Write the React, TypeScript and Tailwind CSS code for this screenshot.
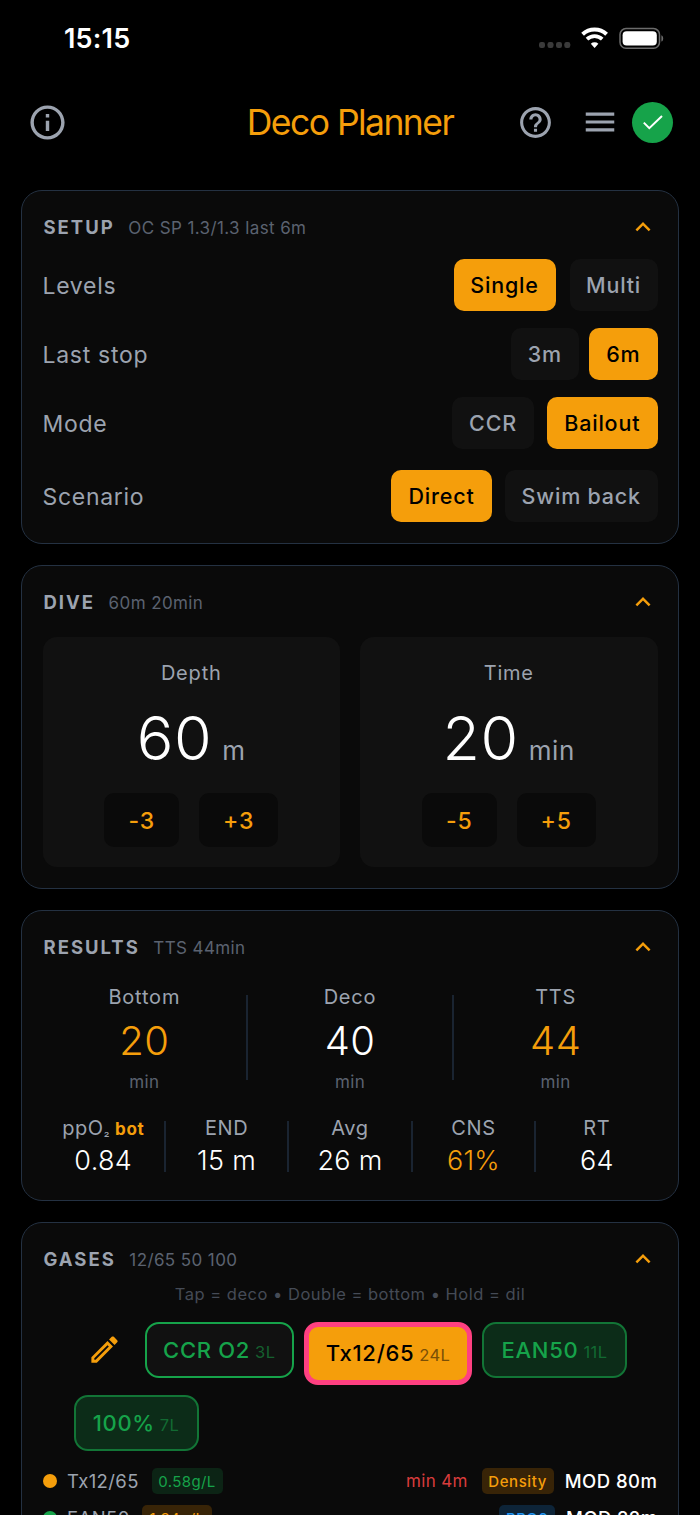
import React from 'react';
import { MdHelpOutline, MdInfoOutline, MdKeyboardArrowUp, MdMenu, MdOutlineEdit } from 'react-icons/md';
import clsx from 'clsx';

interface CardProps {
  title: string;
  summary: string;
  className?: string;
  children: React.ReactNode;
}

const Card: React.FC<CardProps> = ({ title, summary, className, children }) => (
  <section
    className={clsx(
      'w-[658px] shrink-0 overflow-hidden rounded-[21px] border border-[#243142] bg-[#0a0a0a] px-[20.5px]',
      className
    )}
  >
    <header className="flex h-[72px] items-center justify-between">
      <div className="flex items-baseline gap-[13.5px] pt-0.5 pl-px">
        <h2 className="text-[18.5px] font-[650] tracking-[2px] text-[#9ca3af]">{title}</h2>
        <span className="text-[17px] tracking-[0.4px] text-[#5b6270]">{summary}</span>
      </div>
      <MdKeyboardArrowUp className="mb-px size-[30px] text-[#f59e0b]" />
    </header>
    {children}
  </section>
);

interface OptionProps {
  label: string;
  active?: boolean;
  className: string;
}

const Option = ({ label, active, className }: OptionProps) => (
  <button
    className={clsx(
      'flex h-[52px] items-center justify-center rounded-[10px] text-[21.5px] font-[450] tracking-[0.8px]',
      active ? 'bg-[#f59e0b] text-black' : 'bg-[#111111] text-[#9ca3af]',
      className
    )}
  >
    {label}
  </button>
);

const SettingRow = ({ label, children }: { label: string; children: React.ReactNode }) => (
  <div className="flex h-[52px] items-center justify-between">
    <span className="pt-0.5 text-[23px] tracking-[0.7px] text-[#9ca3af]">{label}</span>
    {children}
  </div>
);

interface StepperProps {
  label: string;
  value: number;
  unit: string;
  step: number;
}

const Stepper = ({ label, value, unit, step }: StepperProps) => (
  <div className="flex h-[230px] flex-1 flex-col items-center rounded-[14px] bg-[#111111] pt-[21px]">
    <span className="text-xl leading-[30px] tracking-[0.8px] text-[#9ca3af]">{label}</span>
    <div className="mt-2 flex h-[84px] items-baseline gap-2.5">
      <span className="text-[61px] leading-[84px] font-light tracking-[0.5px] text-white">{value}</span>
      <span className="text-[26px] tracking-[0.6px] text-[#9ca3af]">{unit}</span>
    </div>
    <div className="mt-[13px] flex gap-5 text-[23px] font-[450] tracking-[0.9px] text-[#f59e0b]">
      <button className="h-[54px] w-[75px] rounded-[10px] bg-[#0a0a0a] pt-0.5">-{step}</button>
      <button className="h-[54px] w-[79px] rounded-[10px] bg-[#0a0a0a] pt-0.5">+{step}</button>
    </div>
  </div>
);

const totals = [
  { label: 'Bottom', value: 20, color: 'text-[#f59e0b]' },
  { label: 'Deco', value: 40, color: 'text-white' },
  { label: 'TTS', value: 44, color: 'text-[#f59e0b]' },
];

const stats = [
  { label: 'ppO', sub: '₂', tag: 'bot', value: '0.84', color: 'text-white' },
  { label: 'END', value: '15 m', color: 'text-white' },
  { label: 'Avg', value: '26 m', color: 'text-white' },
  { label: 'CNS', value: '61%', color: 'text-[#f59e0b]' },
  { label: 'RT', value: '64', color: 'text-white' },
];

const Divider = ({ className }: { className: string }) => (
  <div className={clsx('w-0.5 shrink-0 bg-[#1a2431]', className)} />
);

interface GasProps {
  name: string;
  volume: string;
  className: string;
  volumeClass: string;
}

const Gas = ({ name, volume, className, volumeClass }: GasProps) => (
  <button className={clsx('flex items-center justify-center rounded-[14px]', className)}>
    <span className="flex items-baseline gap-[5px]">
      <span className="text-[22px] font-[450] tracking-[0.7px]">{name}</span>
      <span className={clsx('text-[16.5px] tracking-[0.4px]', volumeClass)}>{volume}</span>
    </span>
  </button>
);

const StatusBar = () => (
  <div className="flex h-[76px] shrink-0 items-center justify-between pr-9 pl-16">
    <span className="pt-0.5 text-[27px] font-semibold tracking-[0.2px] text-white">15:15</span>
    <svg width="126" height="24" viewBox="0 0 126 24" fill="none">
      <g fill="#3a3a3a">
        <rect x="1" y="16" width="6" height="6" rx="2.2" />
        <rect x="9.5" y="16" width="6" height="6" rx="2.2" />
        <rect x="18" y="16" width="6" height="6" rx="2.2" />
        <rect x="26.3" y="16" width="6" height="6" rx="2.2" />
      </g>
      <path d="M44.6 8.2a17.5 17.5 0 0 1 24 0" stroke="#fff" strokeWidth="4" />
      <path d="M49 13.2a11 11 0 0 1 15.2 0" stroke="#fff" strokeWidth="3.7" />
      <path d="M52.8 17.8a5.6 5.6 0 0 1 7.6 0L56.6 22z" fill="#fff" />
      <rect x="82" y="2.6" width="39.5" height="19.6" rx="6" stroke="#6b6b6b" strokeWidth="1.5" />
      <rect x="84.6" y="5.2" width="34.2" height="14.4" rx="4" fill="#fff" />
      <path d="M123.4 9.2c2.4.8 2.4 5.6 0 6.4z" fill="#6b6b6b" />
    </svg>
  </div>
);

export default function App() {
  return (
    <div className="flex h-[1515px] w-[700px] flex-col overflow-hidden bg-black font-['Inter','Liberation_Sans',sans-serif]">
      <StatusBar />

      <div className="flex h-[92px] shrink-0 items-center pr-[27px] pl-[27px]">
        <div className="flex flex-1 items-center">
          <MdInfoOutline className="size-[41px] text-[#9ca3af]" />
        </div>
        <h1 className="pt-px text-[35.5px] font-normal tracking-[-1.55px] text-[#f59e0b]">Deco Planner</h1>
        <div className="flex flex-1 items-center justify-end">
          <MdHelpOutline className="size-[37px] text-[#9ca3af]" />
          <MdMenu className="ml-[27px] size-[38px] text-[#9ca3af]" />
          <div className="ml-[13px] flex size-[41px] items-center justify-center rounded-full bg-[#16a34a]">
            <svg width="22" height="17" viewBox="0 0 22 17" fill="none">
              <path d="M1.8 8.6 7.3 14.2 20 2" stroke="#fff" strokeWidth="2" />
            </svg>
          </div>
        </div>
      </div>

      <main className="mt-[22px] flex min-h-0 flex-1 flex-col gap-[21px] pl-[21px]">
        <Card title="SETUP" summary="OC SP 1.3/1.3 last 6m" className="h-[354px]">
          <div className="-mt-1 flex flex-col gap-[17px]">
            <SettingRow label="Levels">
              <div className="flex gap-3.5">
                <Option label="Single" active className="w-[102px]" />
                <Option label="Multi" className="w-[88px]" />
              </div>
            </SettingRow>
            <SettingRow label="Last stop">
              <div className="flex gap-2.5">
                <Option label="3m" className="w-[68.5px]" />
                <Option label="6m" active className="w-[68.5px]" />
              </div>
            </SettingRow>
            <SettingRow label="Mode">
              <div className="flex gap-[13px]">
                <Option label="CCR" className="w-[82px]" />
                <Option label="Bailout" active className="w-[110.5px]" />
              </div>
            </SettingRow>
            <div className="mt-1">
              <SettingRow label="Scenario">
                <div className="flex gap-[13px]">
                  <Option label="Direct" active className="w-[101px]" />
                  <Option label="Swim back" className="w-[152.5px]" />
                </div>
              </SettingRow>
            </div>
          </div>
        </Card>

        <Card title="DIVE" summary="60m 20min" className="h-[324px]">
          <div className="-mt-px flex gap-5">
            <Stepper label="Depth" value={60} unit="m" step={3} />
            <Stepper label="Time" value={20} unit="min" step={5} />
          </div>
        </Card>

        <Card title="RESULTS" summary="TTS 44min" className="h-[291px]">
          <div className="-mt-px flex h-[112px] items-center">
            {totals.map((t, i) => (
              <React.Fragment key={t.label}>
                {i > 0 && <Divider className="mb-0.5 h-[85px]" />}
                <div className="flex flex-1 flex-col items-center">
                  <span className="text-xl leading-[30px] tracking-[0.8px] text-[#9ca3af]">{t.label}</span>
                  <span className={clsx('text-[40px] leading-[58px] font-light tracking-[0.4px]', t.color)}>
                    {t.value}
                  </span>
                  <span className="text-[17px] leading-[24px] tracking-[0.4px] text-[#5b6270]">min</span>
                </div>
              </React.Fragment>
            ))}
          </div>
          <div className="mt-[18px] flex h-[68px] items-center">
            {stats.map((s, i) => (
              <React.Fragment key={s.label}>
                {i > 0 && <Divider className="h-[51px]" />}
                <div className="flex flex-1 flex-col items-center whitespace-nowrap">
                  <span className="h-[30px] text-xl leading-[30px] tracking-[0.6px] text-[#9ca3af]">
                    {s.label}
                    {s.sub && <span className="text-[13px] leading-none">{s.sub}</span>}
                    {s.tag && <b className="ml-[5px] text-[17px] leading-none font-bold text-[#f59e0b]">{s.tag}</b>}
                  </span>
                  <span className={clsx('text-[27px] leading-[36px] font-light tracking-[0.3px]', s.color)}>
                    {s.value}
                  </span>
                </div>
              </React.Fragment>
            ))}
          </div>
        </Card>

        <Card title="GASES" summary="12/65 50 100" className="h-[360px]">
          <p className="-mt-[13px] text-center text-[16.5px] leading-[24px] tracking-[0.5px] text-[#454b56]">
            Tap = deco • Double = bottom • Hold = dil
          </p>
          <div className="mt-4 flex flex-wrap items-start gap-2.5 pl-[31px]">
            <div className="mr-1.5 flex h-[54px] w-[55px] items-center justify-end pr-[7px]">
              <MdOutlineEdit className="size-[35px] text-[#f59e0b]" />
            </div>
            <Gas
              name="CCR O2"
              volume="3L"
              className="h-14 w-[149.5px] border-2 border-[#16a34a] bg-[#111111] text-[#16a34a]"
              volumeClass="text-[#15602f]"
            />
            <Gas
              name="Tx12/65"
              volume="24L"
              className="h-[63px] w-[168px] border-5 border-[#ff4081] bg-[#f59e0b] text-black"
              volumeClass="text-[#7a4f06]"
            />
            <Gas
              name="EAN50"
              volume="11L"
              className="h-14 w-[145px] border-2 border-[#127536] bg-[#0c2c18] text-[#16a34a]"
              volumeClass="text-[#126a32]"
            />
            <Gas
              name="100%"
              volume="7L"
              className="h-14 w-[125px] border-2 border-[#127536] bg-[#0c2c18] text-[#16a34a]"
              volumeClass="text-[#126a32]"
            />
          </div>
          <div className="mt-[17px] flex h-[26px] items-center">
            <i className="mr-[10.5px] size-3.5 rounded-full bg-[#f59e0b]" />
            <span className="w-[84.5px] pt-px text-[18.5px] tracking-[0.4px] text-[#9ca3af]">Tx12/65</span>
            <span className="flex h-[26px] w-[71px] items-center justify-center rounded-[5px] bg-[#0c2415] pt-0.5 text-[15px] tracking-[0.4px] text-[#16a34a]">
              0.58g/L
            </span>
            <span className="ml-auto pt-0.5 text-[17px] tracking-[0.3px] text-[#d93c3c]">min 4m</span>
            <span className="ml-3.5 flex h-[26px] w-[72px] items-center justify-center rounded-[5px] bg-[#382407] pt-0.5 text-[15px] font-[450] tracking-[0.6px] text-[#f59e0b]">
              Density
            </span>
            <span className="ml-[11px] pt-0.5 text-[18.5px] font-[450] tracking-[0.5px] text-white">MOD 80m</span>
          </div>
          <div className="mt-[11px] flex h-[26px] items-center">
            <i className="mr-[10.5px] size-3.5 rounded-full bg-[#16a34a]" />
            <span className="w-[75px] pt-0.5 text-[18.5px] tracking-[0.4px] text-[#9ca3af]">EAN50</span>
            <span className="flex h-[26px] w-[70px] items-center justify-center rounded-[5px] bg-[#382407] pt-0.5 text-[15px] tracking-[0.4px] text-[#f59e0b]">
              1.34g/L
            </span>
            <span className="ml-auto flex h-[26px] w-14 items-center justify-center rounded-[5px] bg-[#0d2438] pt-0.5 text-[15px] font-[450] tracking-[0.6px] text-[#2196f3]">
              PPO2
            </span>
            <span className="ml-[11px] pt-0.5 text-[18.5px] font-[450] tracking-[0.4px] text-white">MOD 22m</span>
          </div>
        </Card>
      </main>
    </div>
  );
}
